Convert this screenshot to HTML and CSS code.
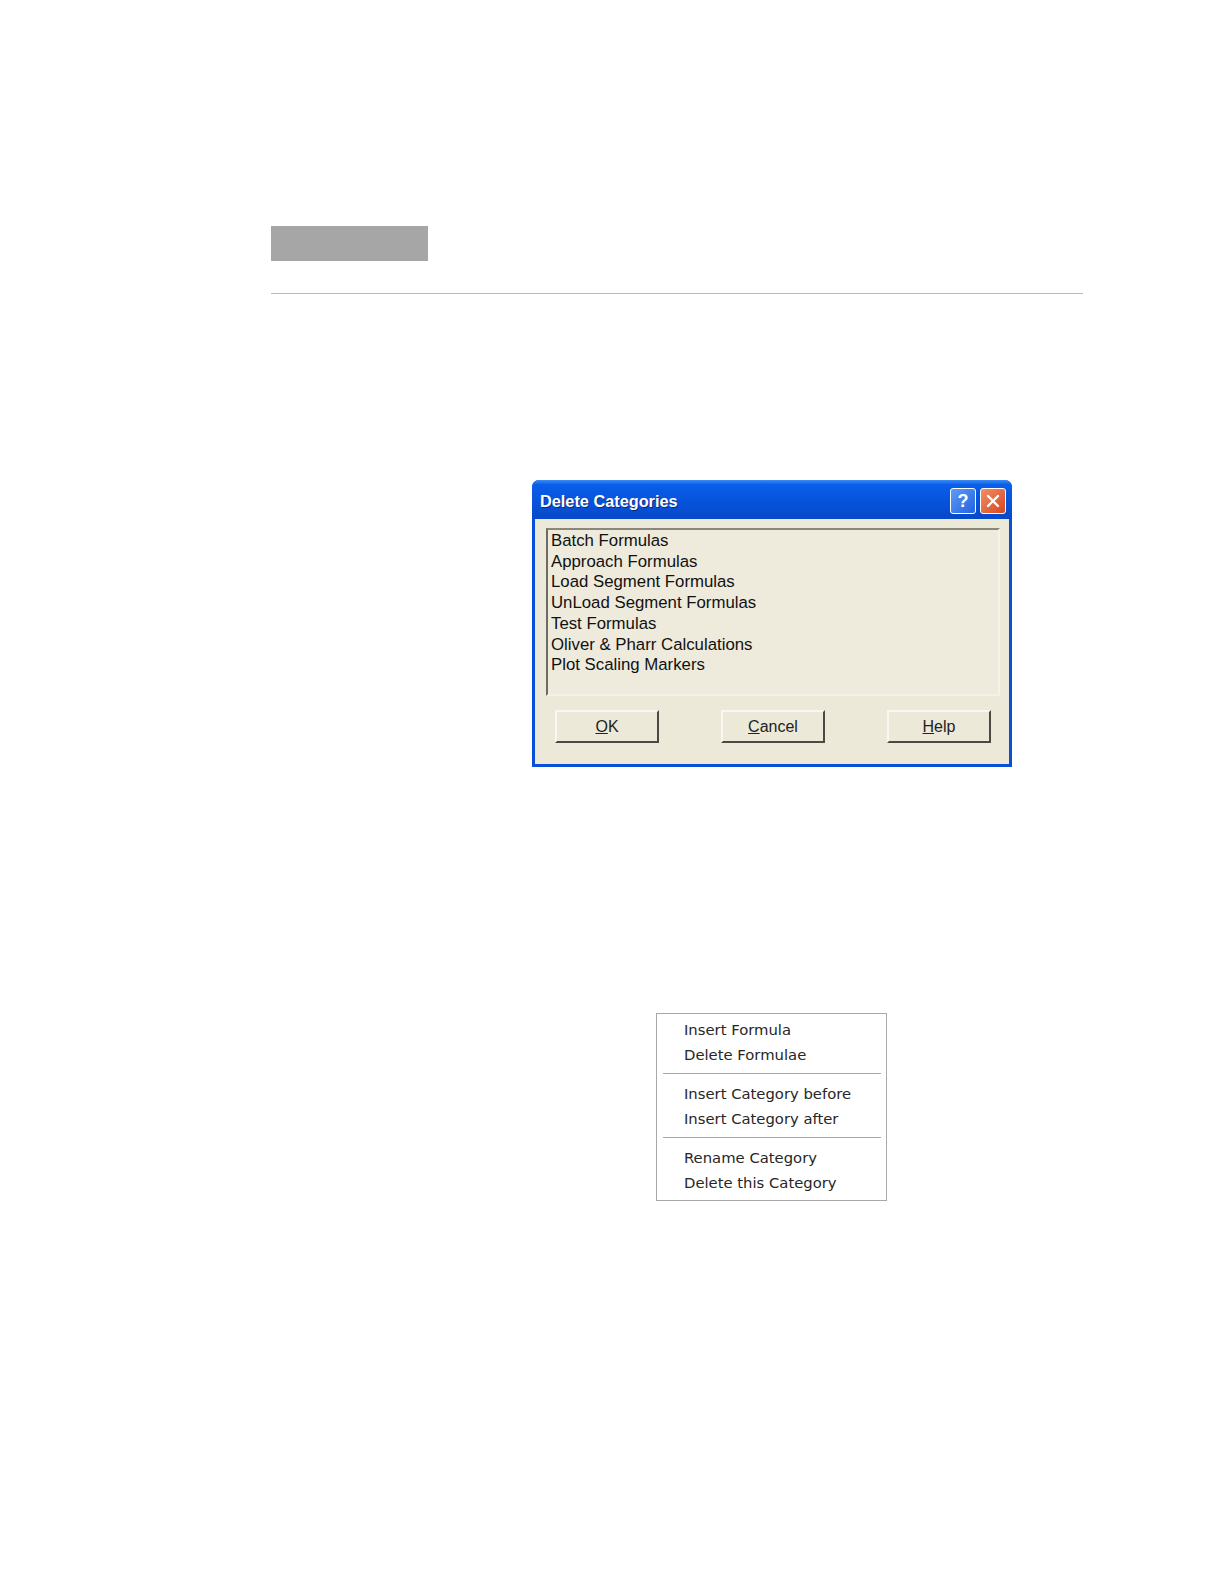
FILE: index.html
```html
<!DOCTYPE html>
<html lang="en">
<head>
    <meta charset="UTF-8">
    <title>Delete Categories</title>
    <link rel="stylesheet" href="styles.css">
</head>
<body>
    <div class="page">
        <div class="tab-mark"></div>
        <hr class="rule">

        <div class="dialog">
            <div class="titlebar">
                <span class="title">Delete Categories</span>
                <div class="title-buttons">
                    <span class="tbtn help-btn">?</span>
                    <span class="tbtn close-btn">
                        <svg width="16" height="16" viewBox="0 0 16 16">
                            <path d="M3 3 L13 13 M13 3 L3 13" stroke="#fff" stroke-width="2.4" stroke-linecap="round"/>
                        </svg>
                    </span>
                </div>
            </div>
            <div class="dialog-body">
                <div class="listbox">
                    <div class="list-item">Batch Formulas</div>
                    <div class="list-item">Approach Formulas</div>
                    <div class="list-item">Load Segment Formulas</div>
                    <div class="list-item">UnLoad Segment Formulas</div>
                    <div class="list-item">Test Formulas</div>
                    <div class="list-item">Oliver &amp; Pharr Calculations</div>
                    <div class="list-item">Plot Scaling Markers</div>
                </div>
                <div class="button-row">
                    <button class="btn"><u>O</u>K</button>
                    <button class="btn"><u>C</u>ancel</button>
                    <button class="btn"><u>H</u>elp</button>
                </div>
            </div>
        </div>

        <div class="context-menu">
            <div class="menu-item">Insert Formula</div>
            <div class="menu-item">Delete Formulae</div>
            <div class="menu-sep"></div>
            <div class="menu-item">Insert Category before</div>
            <div class="menu-item">Insert Category after</div>
            <div class="menu-sep"></div>
            <div class="menu-item">Rename Category</div>
            <div class="menu-item">Delete this Category</div>
        </div>
    </div>
</body>
</html>
```

FILE: styles.css
```css
body {
    margin: 0;
    background: #fff;
    font-family: 'Liberation Sans', Arial, sans-serif;
}
.page {
    width: 812px;
    padding: 226px 0 0 271px;
}
.tab-mark {
    width: 157px;
    height: 35px;
    background: #a6a6a6;
}
.rule {
    margin: 32px 0 0 0;
    border: none;
    border-top: 1px solid #b8b8b8;
    height: 0;
}

/* dialog */
.dialog {
    width: 480px;
    height: 287px;
    margin: 186px 0 0 261px;
    background: #0a4fd8;
    border-radius: 7px 7px 0 0;
    box-sizing: border-box;
    padding: 0 3px 3px 3px;
    display: flex;
    flex-direction: column;
}
.titlebar {
    height: 39px;
    margin: 0 -3px;
    padding: 0 6px 0 8px;
    border-radius: 7px 7px 0 0;
    background: linear-gradient(to bottom, #3d8cf5 0%, #0a5ee8 12%, #0652d9 60%, #0648c8 100%);
    display: flex;
    align-items: center;
    justify-content: space-between;
}
.title {
    color: #fff;
    font-weight: bold;
    font-size: 16.3px;
    text-shadow: 1px 1px 0 #0a2a80;
    margin-top: 3px;
}
.title-buttons {
    display: flex;
    gap: 4px;
    margin-top: 3px;
}
.tbtn {
    width: 24px;
    height: 24px;
    border: 1px solid #fff;
    border-radius: 3px;
    display: flex;
    align-items: center;
    justify-content: center;
    color: #fff;
    font-weight: bold;
    font-size: 18px;
}
.help-btn {
    background: linear-gradient(135deg, #5f9cf7, #2262e0);
}
.close-btn {
    background: linear-gradient(135deg, #f0906a, #d8461c);
}
.dialog-body {
    flex: 1;
    background: #ece9d8;
    padding: 9px 9px 0 11px;
}
.listbox {
    height: 168px;
    box-sizing: border-box;
    border: 2px solid;
    border-color: #8a877a #f4f2e8 #f4f2e8 #6e6c62;
    background: #eeebdd;
    padding: 1px 0 0 3px;
}
.list-item {
    font-size: 16.8px;
    line-height: 20.7px;
    color: #111;
}
.button-row {
    display: flex;
    justify-content: space-between;
    padding: 14px 9px 0 9px;
}
.btn {
    width: 104px;
    height: 33px;
    background: #ece9d8;
    border: 2px solid;
    border-color: #f8f7f2 #4a4943 #4a4943 #f8f7f2;
    font-family: 'Liberation Sans', Arial, sans-serif;
    font-size: 16px;
    color: #222;
    padding: 0;
}

/* context menu */
.context-menu {
    width: 231px;
    box-sizing: border-box;
    margin: 246px 0 0 385px;
    border: 1px solid #a8a8a8;
    background: #fff;
    padding: 3px 0 5px 0;
}
.menu-item {
    font-family: 'DejaVu Sans', sans-serif;
    font-size: 14.8px;
    line-height: 25px;
    padding-left: 27px;
    color: #262626;
}
.menu-sep {
    height: 1px;
    background: #a8a8a8;
    margin: 6px 5px 7px 6px;
}
```
